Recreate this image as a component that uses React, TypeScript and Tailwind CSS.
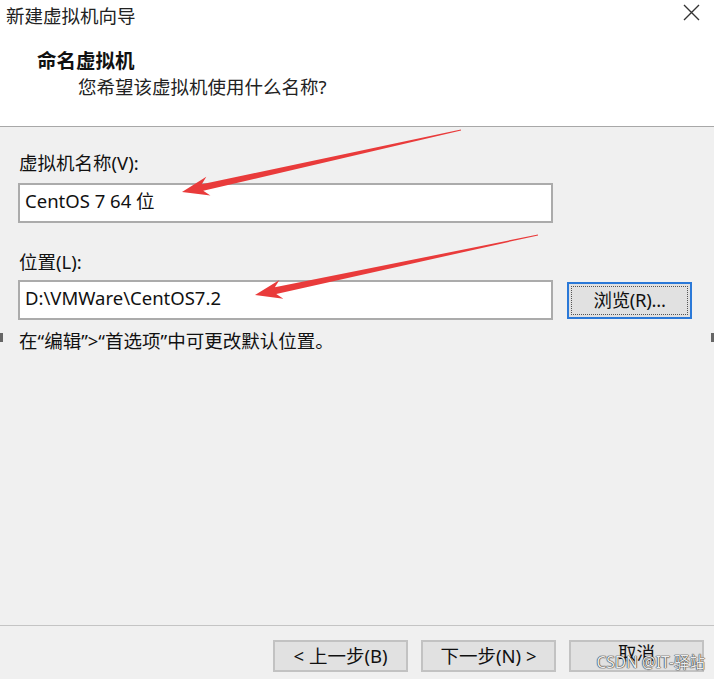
import React from "react";

const FONT = { fontFamily: '"Noto Sans", "Noto Sans CJK SC", sans-serif' };

/** 红色箭头：尾部细、头部粗的标注箭头 */
function arrowPoints(tx: number, ty: number, hx: number, hy: number) {
  const dx = hx - tx;
  const dy = hy - ty;
  const len = Math.hypot(dx, dy);
  const ux = dx / len;
  const uy = dy / len;
  const nx = -uy;
  const ny = ux;
  const headLen = 25;
  const headW = 9.5;
  const shaftW = 3.4;
  const bx = hx - ux * headLen;
  const by = hy - uy * headLen;
  const pts = [
    [tx + nx * 0.4, ty + ny * 0.4],
    [bx + ux * 4 + nx * shaftW, by + uy * 4 + ny * shaftW],
    [bx - ux * 2 + nx * headW, by - uy * 2 + ny * headW],
    [hx, hy],
    [bx - ux * 2 - nx * headW, by - uy * 2 - ny * headW],
    [bx + ux * 4 - nx * shaftW, by + uy * 4 - ny * shaftW],
    [tx - nx * 0.4, ty - ny * 0.4],
  ];
  return pts.map((p) => p.join(",")).join(" ");
}

function WizardButton({ children }: { children: React.ReactNode }) {
  return (
    <button className="flex h-[32px] w-[135px] items-center justify-center border-2 border-[#c2c2c2] bg-[#e1e1e1] text-[18.5px] leading-none text-[#111]">
      {children}
    </button>
  );
}

export default function App() {
  return (
    <div
      className="relative flex h-[679px] w-[714px] flex-col overflow-hidden bg-[#f0f0f0] text-[18.5px] text-[#111]"
      style={FONT}
    >
      <header className="h-[127px] shrink-0 border-b border-[#a8a8a8] bg-white">
        <div className="flex h-[32px] items-center justify-between pl-[6px] pr-[14px]">
          <span className="leading-[26px] text-[#222]">新建虚拟机向导</span>
          <svg width="17" height="17" viewBox="0 0 17 17" className="mb-[8px]">
            <path d="M1 1 L16 16 M16 1 L1 16" stroke="#333" strokeWidth="1.4" />
          </svg>
        </div>
        <div className="pl-[37px] pt-[16px] text-[19.5px] font-bold leading-[26px]">命名虚拟机</div>
        <div className="pl-[78px] leading-[26px] text-[#222]">您希望该虚拟机使用什么名称?</div>
      </header>

      <main className="flex flex-1 flex-col px-[18px] pt-[23px]">
        <label className="pl-[1px] leading-[26px]">虚拟机名称(V):</label>
        <div className="mt-[7px] flex h-[40px] w-[535px] items-center border-2 border-[#ababab] bg-white pb-[4px] pl-[5px]">
          CentOS 7 64 位
        </div>

        <label className="mt-[26px] pl-[1px] leading-[26px]">位置(L):</label>
        <div className="mt-[5px] flex items-center">
          <div className="flex h-[40px] w-[535px] items-center border-2 border-[#ababab] bg-white pb-[4px] pl-[5px]">
            D:\VMWare\CentOS7.2
          </div>
          <button className="ml-[14px] h-[37px] w-[125px] border-2 border-[#2b79d8] bg-[#e1e1e1] p-[2px]">
            <span className="flex h-full w-full items-center justify-center border border-dotted border-[#555] leading-none tracking-[-0.3px]">
              浏览(R)...
            </span>
          </button>
        </div>

        <p className="mt-[8px] pl-[1px] leading-[26px]">在“编辑”&gt;“首选项”中可更改默认位置。</p>
      </main>

      <footer className="flex h-[54px] shrink-0 items-start justify-end gap-[13px] border-t border-[#c4c4c4] pr-[10px] pt-[14px]">
        <WizardButton>&lt; 上一步(B)</WizardButton>
        <WizardButton>下一步(N) &gt;</WizardButton>
        <WizardButton>
          <span className="pb-[6px]">取消</span>
        </WizardButton>
      </footer>

      {/* 截图标注箭头 */}
      <svg className="pointer-events-none absolute inset-0" width="714" height="679">
        <polygon points={arrowPoints(461, 130, 182, 192)} fill="#e93b3b" />
        <polygon points={arrowPoints(538, 235, 255, 295)} fill="#e93b3b" />
      </svg>

      <span className="absolute left-0 top-[333px] h-[9px] w-[3px] bg-[#666]" />
      <span className="absolute right-0 top-[333px] h-[9px] w-[3px] bg-[#666]" />

      <span className="absolute right-[9px] top-[652px] text-[15.5px] leading-[20px] text-[#ececec] [text-shadow:0_0_1px_#333,0_0_1px_#333,0_0_1px_#333]">
        CSDN @IT-驿站
      </span>
    </div>
  );
}
